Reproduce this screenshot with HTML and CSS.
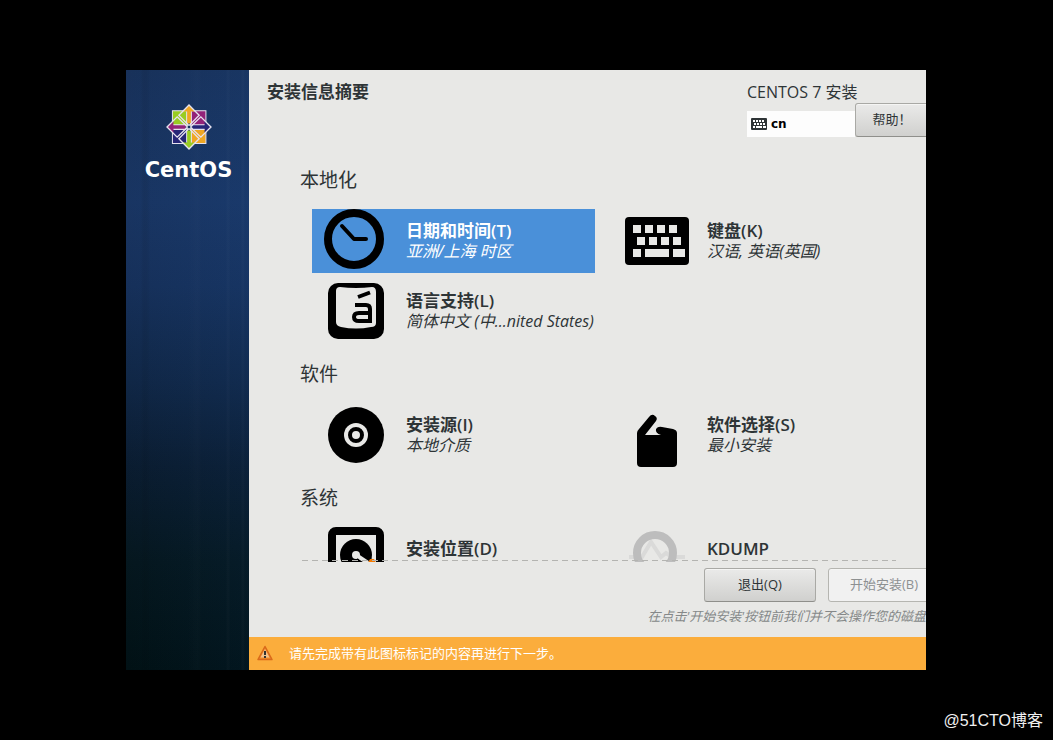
FILE: index.html
```html
<!DOCTYPE html>
<html lang="zh-CN">
<head>
<meta charset="utf-8">
<title>CentOS 7 安装</title>
<link rel="stylesheet" href="styles.css">
</head>
<body>
<div class="window">
  <aside class="sidebar">
    <svg class="logo" viewBox="0 0 136 136" aria-hidden="true">
      <g stroke="#e6e2ee" stroke-width="3">
        <path fill="#9c2" d="M19 20H64V64H19Z"/>
        <path fill="#932279" d="M73 20H118V64H73Z"/>
        <path fill="#262577" d="M19 72H64V117H19Z"/>
        <path fill="#efa724" d="M73 72H118V117H73Z"/>
      </g>
      <path fill="#efa724" d="M68 2 86 22H74V58H62V22H50Z"/>
      <path fill="#262577" d="M134 68 114 86V74H78V62H114V50Z"/>
      <path fill="#9c2" d="M68 134 50 114H62V78H74V114H86Z"/>
      <path fill="#932279" d="M2 68 22 50V62H58V74H22V86Z"/>
      <g fill="none" stroke="#e6e2ee" stroke-width="3">
        <path stroke-width="4" d="M68 3 98 33 68 64 38 33ZM133 68 103 98 72 68 103 38ZM68 133 38 103 68 72 98 103ZM3 68 33 38 64 68 33 98Z"/>
        <path d="M61 22V60M75 22V60M61 76V114M75 76V114M22 61H60M22 75H60M76 61H114M76 75H114"/>
      </g>
      <path fill="#17345f" stroke="#fff" stroke-width="2" d="M63 63H73V73H63Z"/>
    </svg>
    <span class="brand">CentOS</span>
  </aside>
  <main class="main">
    <header class="header">
      <h1 class="title">安装信息摘要</h1>
      <div class="tools">
        <div class="product">CENTOS 7 安装</div>
        <div class="layout">
          <svg class="layout-icon" viewBox="0 0 16 12" aria-hidden="true">
            <rect width="16" height="12" rx="1" fill="#2e3436"/>
            <path stroke="#fff" stroke-width="2" d="M2 3h2M5 3h2M8 3h2M11 3h2M3 6h2M6 6h2M9 6h2M12 6h2M2 9h2M5 9h6M12 9h3"/>
          </svg>
          <span>cn</span>
        </div>
        <button class="button help">帮助！</button>
      </div>
    </header>

    <div class="summary">
      <h2 class="section-title">本地化</h2>
      <div class="spokes">
        <button class="spoke selected">
          <svg class="icon" viewBox="0 0 64 64" aria-hidden="true">
            <circle cx="30" cy="30" r="26" fill="none" stroke="#000" stroke-width="8"/>
            <path d="M18 17 30 30H42" fill="none" stroke="#000" stroke-width="4" stroke-linecap="round" stroke-linejoin="round"/>
          </svg>
          <span class="text"><strong class="name">日期和时间(T)</strong><em class="status">亚洲/上海 时区</em></span>
        </button>
        <button class="spoke">
          <svg class="icon" viewBox="0 0 64 64" aria-hidden="true">
            <rect y="8" width="64" height="48" rx="4"/>
            <path stroke="#e8e8e6" stroke-width="8" d="M8 20h8M20 20h8M32 20h8M44 20h8M12 32h8M24 32h8M36 32h8M48 32h8M8 44h8M20 44h24M48 44h12"/>
          </svg>
          <span class="text"><strong class="name">键盘(K)</strong><em class="status">汉语, 英语(英国)</em></span>
        </button>
        <button class="spoke">
          <svg class="icon" viewBox="0 0 64 64" aria-hidden="true">
            <rect x="4" y="4" width="56" height="56" rx="10"/>
            <path fill="#e8e8e6" d="M16 8Q32 10 48 8 52 8 52 13V44Q52 48 47 48 32 51 17 48 12 47 12 43V12Q12 8 16 8Z"/>
            <path fill="none" stroke="#000" stroke-width="4" d="M34 18 46 13.500M31 26H42Q46 26 46 30V42H35Q30 42 30 38 30 34 35 34H46"/>
          </svg>
          <span class="text"><strong class="name">语言支持(L)</strong><em class="status">简体中文 (中...nited States)</em></span>
        </button>
      </div>

      <h2 class="section-title">软件</h2>
      <div class="spokes">
        <button class="spoke">
          <svg class="icon" viewBox="0 0 64 64" aria-hidden="true">
            <circle cx="32" cy="32" r="28"/>
            <circle cx="32" cy="32" r="12" fill="#e8e8e6"/>
            <circle cx="32" cy="32" r="6" fill="none" stroke="#000" stroke-width="4"/>
          </svg>
          <span class="text"><strong class="name">安装源(I)</strong><em class="status">本地介质</em></span>
        </button>
        <button class="spoke">
          <svg class="icon" viewBox="0 0 64 64" aria-hidden="true">
            <path d="M12 30Q12 28 14 26L24 14Q27 10 30 13 33 15 31 18L20 32H36Q30 30 31 26 33 23 37 24L48 26Q52 27 52 30V60Q52 64 48 64H16Q12 64 12 60Z"/>
          </svg>
          <span class="text"><strong class="name">软件选择(S)</strong><em class="status">最小安装</em></span>
        </button>
      </div>

      <h2 class="section-title">系统</h2>
      <div class="spokes">
        <button class="spoke">
          <svg class="icon" viewBox="0 0 64 64" aria-hidden="true">
            <rect x="8" y="4" width="48" height="56" rx="4" fill="none" stroke="#000" stroke-width="8"/>
            <circle cx="32" cy="28" r="16"/>
            <path d="M32 28 44 36" stroke="#e8e8e6" stroke-width="4"/>
            <circle cx="32" cy="28" r="4" fill="#e8e8e6"/>
            <path d="M33 32 38 38" stroke="#000" stroke-width="2"/>
            <path fill="#f57900" d="M46 32H50L60 50H36Z"/>
          </svg>
          <span class="text"><strong class="name">安装位置(D)</strong></span>
        </button>
        <button class="spoke">
          <svg class="icon" viewBox="0 0 64 64" aria-hidden="true">
            <path d="M4 30H17L26 15 36 30 41 26 47 30H60" fill="none" stroke="#dadad9" stroke-width="4"/>
            <circle cx="30" cy="26" r="18" fill="none" stroke="#bdbdbd" stroke-width="8"/>
          </svg>
          <span class="text"><strong class="name">KDUMP</strong></span>
        </button>
      </div>
    </div>

    <footer class="footer">
      <div class="actions">
        <button class="button">退出(Q)</button>
        <button class="button" disabled>开始安装(B)</button>
      </div>
      <p class="note">在点击'开始安装'按钮前我们并不会操作您的磁盘</p>
    </footer>

    <div class="warning" role="status">
      <svg class="warning-icon" viewBox="0 0 16 16" aria-hidden="true">
        <path d="M8 1.500 15 14.500H1Z" fill="#f08a2a" stroke="#d9691a" stroke-width="1.500" stroke-linejoin="round"/>
        <path d="M8 4 12.500 12.500H3.500Z" fill="#f3c28c"/>
        <path d="M8 6V10M8 11V13" stroke="#333" stroke-width="2"/>
      </svg>
      <span>请先完成带有此图标标记的内容再进行下一步。</span>
    </div>
  </main>
</div>
<div class="credit">@51CTO博客</div>
</body>
</html>
```
FILE: styles.css
```css
* {
  box-sizing: border-box;
}

body {
  margin: 0;
  min-height: 100vh;
  display: flex;
  flex-direction: column;
  background: #000;
  color: #2e3436;
  font-family: "Open Sans", "Noto Sans CJK SC", sans-serif;
  font-size: 13px;
}

.window {
  display: grid;
  grid-template-columns: 123px minmax(0, 1fr);
  height: calc(100vh - 140px);
  margin: 70px 127px 0 126px;
  overflow: hidden;
}

.sidebar {
  display: flex;
  flex-direction: column;
  align-items: center;
  gap: 6px;
  padding: 34px 0 0 2px;
  background:
    linear-gradient(90deg, transparent 12%, rgba(0, 0, 0, 0.06) 14% 17%, transparent 20% 50%, rgba(255, 255, 255, 0.01) 58%, transparent 62% 81%, rgba(255, 255, 255, 0.02) 83%, transparent 85% 93%, rgba(255, 255, 255, 0.02) 95%, transparent 97%),
    linear-gradient(90deg, rgba(0, 0, 0, 0.06), rgba(20, 70, 140, 0.08)),
    linear-gradient(#19345f, #1a3868 22%, #17335f 36%, #11294a 52%, #0b1e33 66%, #051820 82%, #011216);
}

.logo {
  width: 46px;
  height: 46px;
}

.brand {
  color: #fff;
  font: bold 21px/28px "DejaVu Sans", sans-serif;
}

.main {
  display: grid;
  grid-template-rows: auto minmax(0, 1fr) auto auto;
  grid-template-columns: minmax(0, 1fr);
  background: #e8e8e6;
  overflow: hidden;
}

.header {
  display: flex;
  justify-content: space-between;
  padding: 12px 0 28px 18px;
}

.title {
  margin: 0;
  font-size: 17px;
  font-weight: 600;
  line-height: 20px;
}

.tools {
  display: grid;
  grid-template-columns: 108px 71px;
  align-items: end;
  row-gap: 1px;
}

.product {
  grid-column: 1 / -1;
  font-size: 16px;
  line-height: 20px;
}

.layout {
  display: flex;
  align-items: center;
  gap: 4px;
  height: 26px;
  padding: 0 4px;
  background: #fdfdfd;
  color: #000;
  font: bold 12px/26px "DejaVu Sans", sans-serif;
}

.layout-icon {
  width: 16px;
  height: 12px;
}

.button {
  width: 112px;
  height: 34px;
  padding: 0 16px 3px;
  border: 1px solid #a9a9a5;
  border-bottom-color: #8f8f8b;
  border-radius: 3px;
  background: linear-gradient(#eaeae9, #d0d0ce);
  box-shadow: inset 0 1px #f5f5f4;
  color: #2e3436;
  font: inherit;
  white-space: nowrap;
}

.button:disabled {
  border-color: #b5b5b0;
  background: #f1f1f1;
  color: #8d9091;
}

.help {
  width: 74px;
}

.summary {
  position: relative;
  display: flex;
  flex-direction: column;
  gap: 16px;
  padding: 0 30px 0 51px;
  overflow: hidden;
}

.summary::after {
  content: "";
  position: absolute;
  right: 30px;
  bottom: 1px;
  left: 53px;
  height: 1px;
  background: repeating-linear-gradient(90deg, #b4b4b1 0 6px, transparent 6px 10px);
}

.section-title {
  flex: none;
  margin: 0;
  padding-top: 2px;
  font-size: 19px;
  font-weight: 400;
  line-height: 26px;
}

.spokes {
  display: grid;
  grid-template-columns: repeat(2, minmax(0, 1fr));
  gap: 6px 18px;
  flex: none;
  padding-left: 12px;
}

.spoke {
  display: flex;
  align-items: flex-start;
  gap: 18px;
  padding: 0 0 0 12px;
  border: 0;
  background: none;
  color: inherit;
  font: inherit;
  text-align: left;
}

.selected {
  background: #4a90d9;
  color: #fff;
}

.icon {
  flex: none;
  width: 64px;
  height: 64px;
}

.text {
  display: flex;
  flex-direction: column;
  padding-top: 11px;
  white-space: nowrap;
}

.name {
  font-size: 17px;
  font-weight: 600;
  line-height: 21px;
}

.status {
  font-size: 16px;
  line-height: 21px;
}

.footer {
  display: flex;
  flex-direction: column;
  gap: 4px;
  padding: 6px 0 11px;
}

.actions {
  display: flex;
  justify-content: flex-end;
  gap: 12px;
  margin-right: -14px;
}

.note {
  margin: 0;
  color: #858889;
  font-style: italic;
  line-height: 20px;
  text-align: right;
  white-space: nowrap;
}

.warning {
  display: flex;
  align-items: center;
  gap: 16px;
  height: 33px;
  padding: 0 0 2px 8px;
  background: #fbad3c;
  color: #fff;
}

.warning-icon {
  width: 16px;
  height: 16px;
}

.credit {
  margin: 41px 10px 0 0;
  color: #f0f0f0;
  font: 16px/20px "Liberation Sans", "Noto Sans CJK SC", sans-serif;
  text-align: right;
}
```
